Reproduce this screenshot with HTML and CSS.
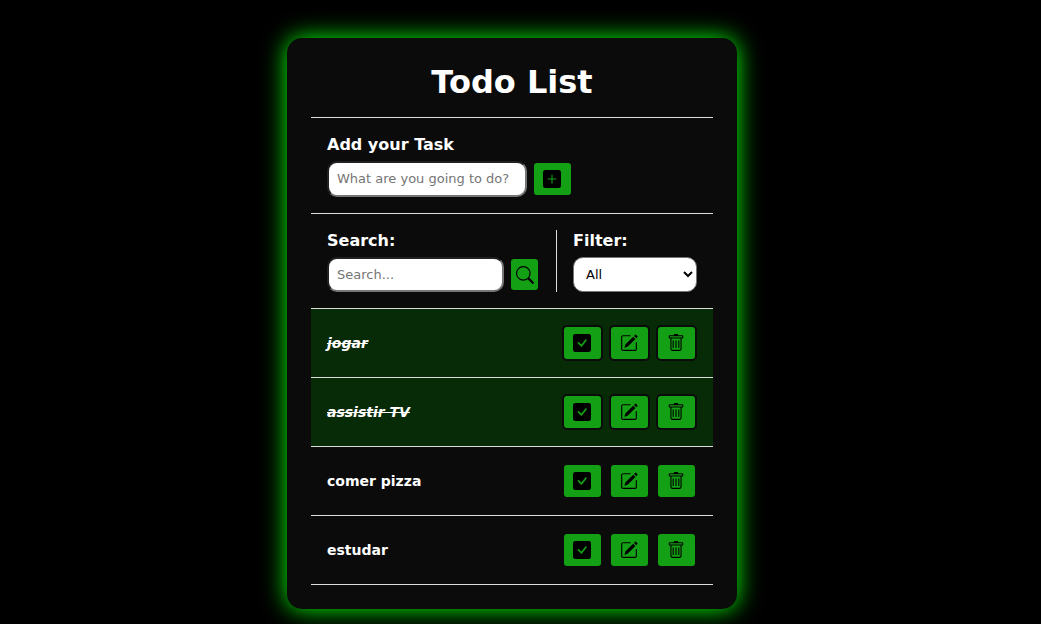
FILE: index.html
```html
<!DOCTYPE html>
<html lang="en">
<head>
<meta charset="utf-8">
<meta name="viewport" content="width=device-width, initial-scale=1">
<title>Todo List</title>
<link rel="stylesheet" href="styles.css">
</head>
<body>
<svg class="sprite" aria-hidden="true">
  <symbol id="plus" viewBox="0 0 16 16"><path d="M2 0a2 2 0 0 0-2 2v12a2 2 0 0 0 2 2h12a2 2 0 0 0 2-2V2a2 2 0 0 0-2-2zm6.5 4.500v3h3a.5.5 0 0 1 0 1h-3v3a.5.5 0 0 1-1 0v-3h-3a.5.5 0 0 1 0-1h3v-3a.5.5 0 0 1 1 0"/></symbol>
  <symbol id="check" viewBox="0 0 16 16"><path d="M2 0a2 2 0 0 0-2 2v12a2 2 0 0 0 2 2h12a2 2 0 0 0 2-2V2a2 2 0 0 0-2-2zm10.030 4.970a.75.75 0 0 1 .011 1.050l-3.992 4.990a.75.75 0 0 1-1.080.020L4.324 8.384a.75.75 0 1 1 1.060-1.060l2.094 2.093 3.473-4.425a.75.75 0 0 1 1.079-.022"/></symbol>
  <symbol id="search" viewBox="0 0 16 16"><path d="M11.742 10.344a6.500 6.500 0 1 0-1.397 1.398l3.850 3.850a1 1 0 0 0 1.415-1.414l-3.850-3.850zM12 6.500a5.500 5.500 0 1 1-11 0 5.500 5.500 0 0 1 11 0"/></symbol>
  <symbol id="edit" viewBox="0 0 16 16"><path d="M15.502 1.940a.5.5 0 0 1 0 .706L14.459 3.690l-2-2L13.502.646a.5.5 0 0 1 .707 0l1.293 1.293zm-1.750 2.456-2-2L4.939 9.210a.5.5 0 0 0-.121.196l-.805 2.414a.25.25 0 0 0 .316.316l2.414-.805a.5.5 0 0 0 .196-.12z"/><path fill-rule="evenodd" d="M1 13.500A1.500 1.500 0 0 0 2.500 15h11a1.500 1.500 0 0 0 1.500-1.500v-6a.5.5 0 0 0-1 0v6a.5.5 0 0 1-.5.5h-11a.5.5 0 0 1-.5-.5v-11a.5.5 0 0 1 .5-.5H9a.5.5 0 0 0 0-1H2.500A1.500 1.500 0 0 0 1 2.500z"/></symbol>
  <symbol id="trash" viewBox="0 0 16 16"><path d="M5.500 5.500A.5.5 0 0 1 6 6v6a.5.5 0 0 1-1 0V6a.5.5 0 0 1 .5-.5m2.500 0a.5.5 0 0 1 .5.5v6a.5.5 0 0 1-1 0V6a.5.5 0 0 1 .5-.5m3 .5a.5.5 0 0 0-1 0v6a.5.5 0 0 0 1 0z"/><path d="M14.500 3a1 1 0 0 1-1 1H13v9a2 2 0 0 1-2 2H5a2 2 0 0 1-2-2V4h-.5a1 1 0 0 1-1-1V2a1 1 0 0 1 1-1H6a1 1 0 0 1 1-1h2a1 1 0 0 1 1 1h3.500a1 1 0 0 1 1 1zM4.118 4 4 4.059V13a1 1 0 0 0 1 1h6a1 1 0 0 0 1-1V4.059L11.882 4zM2.500 3h11V2h-11z"/></symbol>
</svg>
<main class="card">
  <header class="card-header"><h1>Todo List</h1></header>
  <form class="section">
    <label class="label" for="task">Add your Task</label>
    <div class="control">
      <input class="field task-field" id="task" type="text" placeholder="What are you going to do?">
      <button class="btn" type="submit" aria-label="Add task"><svg class="icon"><use href="#plus"/></svg></button>
    </div>
  </form>
  <div class="section toolbar">
    <form class="search">
      <label class="label" for="search-text">Search:</label>
      <div class="control">
        <input class="field search-field" id="search-text" type="text" placeholder="Search...">
        <button class="btn btn-narrow" type="submit" aria-label="Search"><svg class="icon"><use href="#search"/></svg></button>
      </div>
    </form>
    <div class="filter">
      <label class="label" for="filter">Filter:</label>
      <select class="select" id="filter"><option>All</option><option>Done</option><option>To do</option></select>
    </div>
  </div>
  <div class="todo done">
    <h3>jogar</h3>
    <div class="actions">
      <button class="btn" aria-label="Finish"><svg class="icon"><use href="#check"/></svg></button>
      <button class="btn" aria-label="Edit"><svg class="icon"><use href="#edit"/></svg></button>
      <button class="btn" aria-label="Remove"><svg class="icon"><use href="#trash"/></svg></button>
    </div>
  </div>
  <div class="todo done">
    <h3>assistir TV</h3>
    <div class="actions">
      <button class="btn" aria-label="Finish"><svg class="icon"><use href="#check"/></svg></button>
      <button class="btn" aria-label="Edit"><svg class="icon"><use href="#edit"/></svg></button>
      <button class="btn" aria-label="Remove"><svg class="icon"><use href="#trash"/></svg></button>
    </div>
  </div>
  <div class="todo">
    <h3>comer pizza</h3>
    <div class="actions">
      <button class="btn" aria-label="Finish"><svg class="icon"><use href="#check"/></svg></button>
      <button class="btn" aria-label="Edit"><svg class="icon"><use href="#edit"/></svg></button>
      <button class="btn" aria-label="Remove"><svg class="icon"><use href="#trash"/></svg></button>
    </div>
  </div>
  <div class="todo">
    <h3>estudar</h3>
    <div class="actions">
      <button class="btn" aria-label="Finish"><svg class="icon"><use href="#check"/></svg></button>
      <button class="btn" aria-label="Edit"><svg class="icon"><use href="#edit"/></svg></button>
      <button class="btn" aria-label="Remove"><svg class="icon"><use href="#trash"/></svg></button>
    </div>
  </div>
</main>
</body>
</html>
```
FILE: styles.css
```css
* { box-sizing: border-box; margin: 0; padding: 0; }
html { background: #000; }
body {
  min-height: 100vh;
  padding: 38px 17px 0 0;
  background: #000;
  color: #fff;
  font-family: Verdana, "DejaVu Sans", sans-serif;
}
.sprite { display: none; }
.card {
  max-width: 450px;
  margin: 0 auto;
  padding: 24px;
  background: #0b0b0b;
  border-radius: 15px;
  box-shadow: 0 0 24px #0f0;
}
.card-header {
  padding-bottom: 14px;
  border-bottom: 1px solid #ddd;
  text-align: center;
}
h1 { font-size: 32px; line-height: 41px; }
.section { padding: 16px; border-bottom: 1px solid #ddd; }
.label {
  display: block;
  margin-bottom: 5px;
  font-size: 16px;
  font-weight: bold;
  line-height: 22px;
}
.control { display: flex; gap: 5px; }
.field {
  min-width: 0;
  padding: 8px;
  border: 2px inset #767676;
  border-radius: 10px;
  background: #fff;
  font: 13px/16px Verdana, "DejaVu Sans", sans-serif;
}
.field::placeholder { color: #757575; }
.task-field { width: 200px; }
.btn {
  display: flex;
  align-items: center;
  justify-content: center;
  width: 41px;
  height: 36px;
  padding-right: 1px;
  border: 2px solid #0b0b0b;
  border-radius: 5px;
  background: #14a014;
  color: #000;
  cursor: pointer;
}
.icon { flex: none; width: 18px; height: 18px; fill: currentColor; }
.toolbar { display: flex; gap: 16px; }
.search { flex: 1; min-width: 0; }
.search-field { flex: 1; height: 35px; }
.btn-narrow { width: 31px; height: 35px; padding: 0; }
.filter {
  width: 141px;
  padding-left: 16px;
  border-left: 1px solid #ddd;
}
.select {
  width: 100%;
  height: 35px;
  padding: 8px;
  border: 1px solid #767676;
  border-radius: 10px;
  background: #fff;
  color: #000;
  font: 13px/16px Verdana, "DejaVu Sans", sans-serif;
}
.todo {
  display: flex;
  align-items: center;
  justify-content: space-between;
  padding: 16px;
  border-bottom: 1px solid #ddd;
}
.todo h3 { font-size: 14px; }
.actions { display: flex; gap: 6px; }
.done { background: #072a07; }
.done h3 { font-style: italic; text-decoration: line-through; }
```
